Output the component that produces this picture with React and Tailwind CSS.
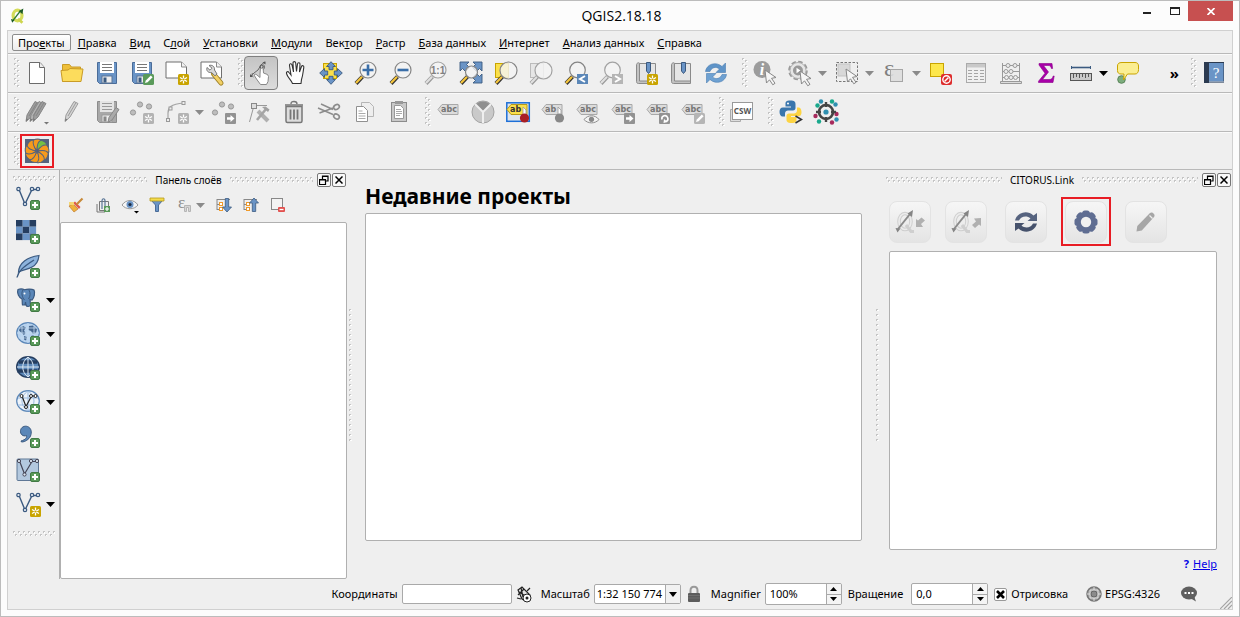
import React, { useId, useState } from "react";

const BLUE = "#6a94c6";
const NAVY = "#3b5a80";
const PALE = "#d3d3d3";

function Icon({ size = 24, children }) {
  return (
    <svg width={size} height={size} viewBox={`0 0 ${size} ${size}`} fill="none" aria-hidden="true" className="shrink-0 overflow-visible">
      {children}
    </svg>
  );
}

function Grip({ vertical, className }) {
  const id = useId();
  return (
    <svg className={className} aria-hidden="true">
      <defs>
        <pattern id={id} width={vertical ? 6 : 5} height={vertical ? 5 : 6} patternUnits="userSpaceOnUse">
          {vertical ? (
            <>
              <rect x="0" y="0" width="2" height="2" fill="#c4c4c4" />
              <rect x="1" y="1" width="2" height="1" fill="#fff" />
              <rect x="3" y="2" width="2" height="2" fill="#c4c4c4" />
              <rect x="4" y="3" width="2" height="1" fill="#fff" />
            </>
          ) : (
            <>
              <rect x="0" y="0" width="2" height="2" fill="#c4c4c4" />
              <rect x="1" y="1" width="1" height="2" fill="#fff" />
              <rect x="2" y="3" width="2" height="2" fill="#c4c4c4" />
              <rect x="3" y="4" width="1" height="2" fill="#fff" />
            </>
          )}
        </pattern>
      </defs>
      <rect width="100%" height="100%" fill={`url(#${id})`} />
    </svg>
  );
}

function Caret({ color = "#000" }) {
  return (
    <svg width="9" height="5" viewBox="0 0 9 5" aria-hidden="true" className="shrink-0">
      <path d="M0 0h9L4.500 5z" fill={color} />
    </svg>
  );
}

/* ---- badges drawn over the lower right corner ---- */
const Plus = ({ x = 14, y = 14 }) => (
  <g transform={`translate(${x} ${y})`}>
    <rect x=".5" y=".5" width="9" height="9" rx="1.500" fill="#5a9a5a" stroke="#417a45" />
    <path d="M5 2v6M2 5h6" stroke="#fff" strokeWidth="2" />
  </g>
);
const Star = ({ x = 13, y = 13, c = "#c9a400" }) => (
  <g transform={`translate(${x} ${y})`}>
    <rect width="11" height="11" rx="1.500" fill={c} />
    <path d="M5.500 1.500v8M2 3.500l7 4M9 3.500l-7 4" stroke="#fff" strokeWidth="1.300" />
    <circle cx="5.500" cy="5.500" r="1.100" fill={c} />
  </g>
);
const GoBadge = ({ x = 13, y = 13 }) => (
  <g transform={`translate(${x} ${y})`}>
    <rect width="11" height="11" rx="1" fill="#929292" />
    <path d="M2 4.200h3.500V2L9.500 5.500 5.500 9V6.800H2z" fill="#fff" />
  </g>
);
const PenBadge = ({ x = 13, y = 13, c = "#5a9a5a" }) => (
  <g transform={`translate(${x} ${y})`}>
    <rect width="11" height="11" rx="1.500" fill={c} />
    <path d="M2 9l.8-2.600 5-5 1.800 1.800-5 5z" fill="#fff" />
  </g>
);

/* ---- project icons ---- */
const NewFile = () => (
  <Icon>
    <path d="M4.500 1.500h10.500l4.500 5v16h-15z" fill="#fff" stroke="#6c6c6c" />
    <path d="M14.500 1.500v5h5" fill="#eee" stroke="#6c6c6c" />
  </Icon>
);
const OpenFolder = () => (
  <Icon>
    <path d="M2.500 20.500v-17h7l2 2.500h9v4" fill="#eebf3a" stroke="#c99b26" />
    <path d="M2.500 20.500L1 9.500l7-.5 2-1.500L23 8l-2 12.500z" fill="#fcdc5c" stroke="#c99b26" />
  </Icon>
);
const Floppy = ({ grey, children }) => (
  <Icon>
    <path d="M2.500 1.500h19v21h-17l-2-2z" fill={grey ? "#a8a8a8" : BLUE} stroke={grey ? "#8c8c8c" : "#4a6c98"} />
    <rect x="5" y="1" width="14" height="11" fill={grey ? "#e4e4e4" : "#fff"} />
    <path d="M7 3.500h10M7 6.500h10M7 9.500h10" stroke={grey ? "#999" : "#777"} strokeWidth="1.200" />
    <rect x="7" y="15" width="10" height="7" fill="#ececec" stroke={grey ? "#999" : "#5a7497"} />
    <rect x="8.500" y="16.500" width="3" height="5" fill={grey ? "#888" : NAVY} />
    {children}
  </Icon>
);
const Sheet = () => (
  <>
    <path d="M1 1h15.500l5 5v11H1z" fill="#fff" stroke="#6f6f6f" />
    <path d="M16.500 1v5h5" fill="#f2f2f2" stroke="#8a8a8a" />
  </>
);
const NewComposer = () => (
  <Icon>
    <Sheet />
    <Star />
  </Icon>
);
const ComposerManager = () => (
  <Icon>
    <Sheet />
    <path d="M13.500 13l7.500 9" stroke="#9c7f25" strokeWidth="5" strokeLinecap="round" />
    <path d="M14 13.500l7 8.500" stroke="#f2d066" strokeWidth="3.200" strokeLinecap="round" />
    <path d="M9 4.500c3-1 6 1 5.500 4.500l2.500 4-2 1.800-3.500-3.300C8 12 6 9.500 7 6.500l3 2.700 2-2z" fill="#d8d8d8" stroke="#777" />
  </Icon>
);

/* ---- navigation icons ---- */
const TouchHand = () => (
  <Icon>
    <path d="M11 13L11.500 6c.2-1.700 2.400-1.700 2.500 0l.5 6 4 1.500 1 2-.5 5-1.500 3h-6l-4-5.500-2.500-4c.5-1 2-1 3 0l3 2.500z" fill="#fff" stroke="#888" />
    <path d="M1.500 15.500L5 12l4-3 3-5 3.500-3" stroke="#666" />
    <path d="M14.500 8.500c1.500-1.500 1.500-3.500 0-5M4.500 16c-1.500-1-2-2.500-1-4" stroke="#777" />
    <path d="M1 13v3h3zM16.500.5v3l-3-2z" fill="#555" />
    <circle cx="12.700" cy="5.500" r="1.600" stroke="#555" />
  </Icon>
);
const PanHand = () => (
  <Icon>
    <path d="M8 22.500c-1-3-5-6-6-10-.5-2 1.500-2.500 2.500-1L6.500 14 5 4.500c-.2-2 2-2.300 2.500-.5l1.500 7-.5-9c0-1.800 2.500-1.800 2.700 0l.8 8.500 1-7.500c.3-1.800 2.600-1.500 2.500.3L15 11l2-5.500c.7-1.500 2.600-.8 2.300.8-.8 5-1 9-2.300 12.200l-.5 4z" transform="translate(.5 0)" fill="#fff" stroke="#333" strokeWidth="1.100" />
  </Icon>
);
const PanSelection = () => (
  <Icon>
    <rect x="4.500" y="2.500" width="13" height="15" fill="#fbe04a" stroke="#c9a400" />
    <path d="M12 .7l4.500 4.800h-2.500v3.200h-4V5.500H7.500zM12 23.300l4.500-4.800h-2.500v-3.200h-4v3.200H7.500zM.7 12l4.800-4.500v2.500h3.200v4H5.500v2.500zM23.300 12l-4.800-4.500v2.500h-3.200v4h3.200v2.500z" fill={BLUE} stroke={NAVY} strokeWidth=".9" />
  </Icon>
);
const Lens = ({ grey, cx = 14, cy = 9, r = 8 }) => (
  <>
    <path d="M2 22.500l6.500-6.800" stroke={grey ? "#999" : "#333"} strokeWidth="4" />
    <path d="M2 22l6-6.300" stroke={grey ? "#e0e0e0" : "#f5c53c"} strokeWidth="2.200" />
    <circle cx={cx} cy={cy} r={r} fill="#f4f4f4" fillOpacity=".82" stroke={grey ? "#a2a2a2" : "#858585"} strokeWidth="1.200" />
  </>
);
const ZoomIn = () => (
  <Icon>
    <Lens />
    <path d="M14 3.500v11M8.500 9h11" stroke="#3a6ea8" strokeWidth="2.600" />
  </Icon>
);
const ZoomOut = () => (
  <Icon>
    <Lens />
    <path d="M8.500 9h11" stroke="#3a6ea8" strokeWidth="2.600" />
  </Icon>
);
const ZoomNative = () => (
  <Icon>
    <Lens grey />
    <text x="14" y="12.500" textAnchor="middle" fontSize="10" fontWeight="bold" fill="#808080" fontFamily="Liberation Sans, sans-serif">1:1</text>
  </Icon>
);
const ZoomFull = () => (
  <Icon>
    <path d="M1 1h9L7.500 3.500l3 3-4 4-3-3L1 10zM23 1h-9l2.500 2.500-3 3 4 4 3-3L23 10zM23 22v-9l-2.500 2.500-3-3-4 4 3 3L14 22z" fill={BLUE} stroke={NAVY} strokeWidth=".9" />
    <Lens cx={12.500} cy={11} r={6} />
  </Icon>
);
const ZoomSelection = () => (
  <Icon>
    <rect x="1.500" y="2.500" width="13" height="14" fill="#fbe04a" stroke="#c9a400" />
    <Lens cx={14.500} cy={9.500} r={8.500} />
  </Icon>
);
const ZoomLayer = () => (
  <Icon>
    <rect x="1.500" y="2.500" width="13" height="14" fill="#e6e6e6" stroke="#bbb" />
    <Lens grey cx={14.500} cy={9.500} r={8.500} />
  </Icon>
);
const ZoomHistory = ({ next }) => (
  <Icon>
    <Lens grey={next} cx={13.500} cy={9} r={7.800} />
    <rect x="13" y="13" width="11" height="10" fill={next ? "#b5b5b5" : "#5b87b8"} />
    <path d={next ? "M16 15l5 3-5 3" : "M21 15l-5 3 5 3"} stroke="#fff" strokeWidth="2" />
  </Icon>
);
const Book = ({ star }) => (
  <Icon>
    <path d="M2.500 3.500c0-1.500 3-2.500 3-1v17h16v3h-17c-1.500 0-2-1-2-2z" fill="#c2c2c2" stroke="#8a8a8a" />
    <path d="M5.500 2.500h16v17.500h-16z" fill="#e5e5e5" stroke="#8a8a8a" />
    <path d="M12.500 1.500h4v8.500l-2 2.500-2-2.500z" fill={BLUE} stroke={NAVY} />
    {star && <Star x={13} y={13} />}
  </Icon>
);
const Refresh = () => (
  <Icon>
    <path d="M1.500 10.500C2.500 3 12 0 18 5.500L21.500 2v9.500H12L15.500 8C12 5 7.500 6.500 6 10.500z" fill="#5f94c8" stroke="#4a7cb0" strokeWidth=".6" />
    <path d="M22.500 13.500C21.500 21 12 24 6 18.500L2.500 22v-9.500H12L8.500 16C12 19 16.500 17.500 18 13.500z" fill="#6ea1d2" stroke="#4a7cb0" strokeWidth=".6" />
  </Icon>
);

/* ---- attribute icons ---- */
const Cursor = ({ x = 12, y = 9 }) => (
  <path transform={`translate(${x} ${y})`} d="M0 0l11 7.500-4.500.8 3.500 5-2.200 1.500-3.300-5L1.500 13z" fill="#f6f6f6" stroke="#888" />
);
const Identify = () => (
  <Icon>
    <circle cx="9" cy="8.500" r="8.500" fill="#9c9c9c" />
    <text x="9" y="14" textAnchor="middle" fontSize="16" fontWeight="bold" fontStyle="italic" fill="#fff" fontFamily="Liberation Serif, serif">i</text>
    <Cursor />
  </Icon>
);
const RunAction = () => (
  <Icon>
    <circle cx="10" cy="9.500" r="8.800" stroke="#999" strokeWidth="2" strokeDasharray="4.500 2.400" />
    <circle cx="10" cy="9.500" r="8" fill="#e6e6e6" stroke="#b0b0b0" />
    <circle cx="10" cy="9.500" r="5" fill="#999" />
    <path d="M8.500 6.800l4 2.700-4 2.700z" fill="#fff" />
    <Cursor x={12} y={10} />
  </Icon>
);
const SelectRect = () => (
  <Icon>
    <rect x="1.500" y="1.500" width="21" height="19" stroke="#777" strokeDasharray="2.500 1.500" />
    <rect x="3" y="3" width="12" height="12" fill="#d8d8d8" stroke="#c3c3c3" />
    <Cursor x={11} y={8} />
  </Icon>
);
const SelectExpr = () => (
  <Icon>
    <text x="2" y="15" fontSize="24" fill="#808080" fontFamily="Liberation Serif, serif">ε</text>
    <rect x="8.500" y="8.500" width="12" height="12" fill="#dcdcdc" fillOpacity=".85" stroke="#a5a5a5" />
  </Icon>
);
const Deselect = () => (
  <Icon>
    <rect x="1.500" y="2.500" width="13" height="13" fill="#fde74c" stroke="#c9a400" />
    <rect x="12" y="13" width="11" height="11" rx="2" fill="#dd2c2c" />
    <circle cx="17.500" cy="18.500" r="3.700" stroke="#fff" strokeWidth="1.400" />
    <path d="M15.500 20.500l4-4" stroke="#fff" strokeWidth="1.400" />
  </Icon>
);
const TableIcon = () => (
  <Icon>
    <rect x="2.500" y="2.500" width="19" height="19" fill="#f0f0f0" stroke="#aaa" />
    <rect x="3" y="3" width="18" height="3.500" fill="#c9c9c9" />
    <path d="M4 9.500h4M10 9.500h4M16 9.500h4M4 12.500h4M10 12.500h4M16 12.500h4M4 15.500h4M10 15.500h4M16 15.500h4M4 18.500h4M10 18.500h4M16 18.500h4" stroke="#a5a5a5" />
  </Icon>
);
const Abacus = () => (
  <Icon>
    <path d="M3.500 2v18M20.500 2v18M3.500 4.500h17M3.500 10.500h17M3.500 16.500h17" stroke="#999" />
    <path d="M1.500 20.500h21v2h-21z" fill="#ddd" stroke="#999" />
    {[[9, 4.500], [16, 4.500], [7, 10.500], [12, 10.500], [7.500, 16.500], [12, 16.500], [16.500, 16.500]].map(([x, y]) => (
      <circle key={`${x}-${y}`} cx={x} cy={y} r="2" fill="#ececec" stroke="#999" />
    ))}
  </Icon>
);
const Sigma = () => (
  <Icon>
    <path d="M5 2.500h13l.6 5h-1.200c-.5-2.500-1.500-3-3.500-3H9.500l5 6.500-6 7.500h6.500c2.500 0 3.500-1 4.200-3.500h1l-1.200 6.500H4.500v-1.300L11 12.300 5 4z" fill="#a800a8" stroke="#8a008a" strokeWidth=".6" />
  </Icon>
);
const Measure = () => (
  <Icon>
    <path d="M2 6.500h20" stroke={NAVY} strokeWidth="1.600" />
    <path d="M2.500 5v3M21.500 5v3" stroke={NAVY} />
    <rect x="1.500" y="12.500" width="21" height="7" fill="#c9c9c9" stroke="#555" />
    <path d="M4.500 13v4M7.500 13v3M10.500 13v4M13.500 13v3M16.500 13v4M19.500 13v3" stroke="#555" />
  </Icon>
);
const Tip = () => (
  <Icon>
    <circle cx="5.500" cy="18.500" r="3.800" fill="#7dad7d" stroke="#5a855a" />
    <path d="M6 1.500h13c2 0 3.500 1 3.500 3.500v3.500c0 2.500-1 4.500-3.500 4.500h-7.500l-4 6 .5-6H5c-2 0-3.500-1-3.500-3.500V5c0-2.500 1.500-3.500 4.500-3.500z" fill="#fbee92" stroke="#c9a400" />
  </Icon>
);
const HelpBook = () => (
  <Icon>
    <rect x="2" y="1" width="20" height="21" fill="#2b3a50" />
    <rect x="7" y="2" width="14.500" height="18.500" fill={BLUE} />
    <path d="M7 21h15" stroke="#cfd8e4" />
    <text x="14.200" y="16.500" textAnchor="middle" fontSize="15" fill="#fff" fontFamily="Liberation Serif, serif">?</text>
  </Icon>
);

/* ---- digitizing icons ---- */
const PencilShape = ({ dx = 0, fill = PALE, edge = "#9b9b9b" }) => (
  <g transform={`translate(${dx} 0)`}>
    <path d="M4 21.500l1-6.500L13 1.500l4 2L9 17z" fill={fill} stroke={edge} />
    <path d="M7 16L15 2.500" stroke={edge} />
    <path d="M4 21.500l.5-3 2 1z" fill="#777" />
  </g>
);
const Edits = () => (
  <Icon>
    <PencilShape dx={-3} fill="#9d9d9d" edge="#868686" />
    <PencilShape dx={1} fill="#b3b3b3" edge="#8a8a8a" />
    <PencilShape dx={4} fill="#9d9d9d" edge="#868686" />
    <path d="M19 22h5l-2.500 2.500z" fill="#777" />
  </Icon>
);
const TogglePencil = () => (
  <Icon>
    <PencilShape dx={1} />
  </Icon>
);
const SaveEdits = () => (
  <Floppy grey>
    <path d="M13 22.500l1-5 7-10 3 2-7 10.500z" fill="#aaa" stroke="#888" />
  </Floppy>
);
const Points = () =>
  [[3, 12.500], [10, 4.500], [19, 6.500]].map(([x, y]) => (
    <circle key={x} cx={x} cy={y} r="2.600" fill="#bdbdbd" stroke="#989898" />
  ));
const AddPoint = () => (
  <Icon>
    <Points />
    <Star c="#b3b3b3" />
  </Icon>
);
const AddCurve = () => (
  <Icon>
    <path d="M3 20V13c0-5 2-9 16-10" stroke="#a5a5a5" strokeWidth="1.200" />
    {[[1.500, 18.500], [4, 7], [17, 1.500]].map(([x, y]) => (
      <rect key={x} x={x} y={y} width="3" height="3" fill="#eee" stroke="#999" />
    ))}
    <Star c="#b3b3b3" />
  </Icon>
);
const MovePoint = () => (
  <Icon>
    <Points />
    <GoBadge />
  </Icon>
);
const NodeTool = () => (
  <Icon>
    <path d="M2.500 22L7 5.500H20" stroke="#999" />
    <rect x="4.500" y="3.500" width="5" height="5" fill="#ddd" stroke="#888" />
    <path d="M11 11l10 10" stroke="#b0b0b0" strokeWidth="4" />
    <path d="M19 9l-9 11" stroke="#a5a5a5" strokeWidth="2.600" />
    <path d="M15 7l6 5 1.500-2.500-4-3z" fill="#a0a0a0" />
  </Icon>
);
const Trash = () => (
  <Icon>
    <path d="M4 6.500h16v14.500c0 1-.5 1.500-1.500 1.500h-13c-1 0-1.500-.5-1.500-1.500z" fill="#ddd" stroke="#777" strokeWidth="1.500" />
    <path d="M3 5h18M9 4c0-2 1-2.500 3-2.500s3 .5 3 2.500" stroke="#777" strokeWidth="1.400" />
    <path d="M8.500 9.500v10M12 9.500v10M15.500 9.500v10" stroke="#777" strokeWidth="1.800" />
  </Icon>
);
const Scissors = () => (
  <Icon>
    <path d="M1 8l15 6.500M4 4l12 5.500M16 8L2.500 13" stroke="#8c8c8c" strokeWidth="1.400" />
    <ellipse cx="19.500" cy="7" rx="3" ry="2.300" transform="rotate(-30 19.500 7)" stroke="#8c8c8c" strokeWidth="1.600" />
    <ellipse cx="19.500" cy="16.500" rx="3" ry="2.300" transform="rotate(35 19.500 16.500)" stroke="#8c8c8c" strokeWidth="1.600" />
  </Icon>
);
const Copy = () => (
  <Icon>
    <path d="M9.500 2.500h8l4 4v10h-12z" fill="#eee" stroke="#b5b5b5" />
    <path d="M4.500 6.500h7l4 4v11h-11z" fill="#fff" stroke="#909090" />
    <path d="M6.500 11h4M6.500 13.500h7M6.500 16h7M6.500 18.500h7" stroke="#aaa" />
  </Icon>
);
const Paste = () => (
  <Icon>
    <rect x="4.500" y="2.500" width="15" height="19" fill="#c9c9c9" stroke="#8c8c8c" />
    <path d="M7.500 5.500h6l3 3v10h-9z" fill="#fff" stroke="#999" />
    <path d="M8 1h8v3H8z" fill="#999" />
    <path d="M9 9.500h5M9 11.500h6M9 13.500h6M9 15.500h4" stroke="#aaa" />
  </Icon>
);

/* ---- label icons ---- */
const Tag = ({ text = "abc", fill = "#dcdcdc", stroke = "#a8a8a8", color = "#757575" }) => (
  <>
    <path d="M2 10.500l4-5h16v10H6z" fill={fill} stroke={stroke} />
    <text x="5" y="13" fontSize="8" fontWeight="bold" fill={color} fontFamily="DejaVu Sans, sans-serif">{text}</text>
  </>
);
const LabelPlain = () => (
  <Icon>
    <g transform="translate(0 -1)"><Tag /></g>
  </Icon>
);
const Diagram = () => (
  <Icon>
    <circle cx="12" cy="12" r="11" fill="#c9c9c9" stroke="#a3a3a3" />
    <path d="M12 12L4.500 4.500A11 11 0 0 1 19.500 4.500z" fill="#8f8f8f" />
    <path d="M12 23V12L4 4M12 12l8-8" stroke="#efefef" strokeWidth="2" />
  </Icon>
);
const Pin = ({ head = "#888" }) => (
  <>
    <path d="M17 7v8h3v-5z" fill="#fff" stroke="#999" strokeWidth=".8" />
    <circle cx="18.500" cy="18" r="4.600" fill={head} />
  </>
);
const PinActive = () => (
  <Icon>
    <rect x=".8" y="2.800" width="22.500" height="18.500" fill="#dfe5ec" stroke="#1d6fd8" strokeWidth="1.500" />
    <g transform="translate(-1 -1)"><Tag text="ab" fill="#fbe04a" stroke="#b79a1a" color="#333" /></g>
    <Pin head="#a91f24" />
  </Icon>
);
const PinGrey = () => (
  <Icon>
    <g transform="translate(-1 -1)"><Tag text="ab" /></g>
    <Pin />
  </Icon>
);
const LabelEye = () => (
  <Icon>
    <g transform="translate(-1 -1)"><Tag /></g>
    <path d="M8 19.500c4-5 11-5 15 0-4 4.500-11 4.500-15 0z" fill="#f4f4f4" stroke="#8c8c8c" />
    <circle cx="15.500" cy="19.300" r="2.600" fill="#888" />
  </Icon>
);
const LabelMove = () => (
  <Icon>
    <g transform="translate(-1 -1)"><Tag /></g>
    <GoBadge />
  </Icon>
);
const LabelRotate = () => (
  <Icon>
    <g transform="translate(-1 -1)"><Tag /></g>
    <rect x="13" y="13" width="11" height="11" rx="1" fill="#929292" />
    <path d="M16 19.500a3 3 0 1 1 4 2" stroke="#fff" strokeWidth="1.600" />
    <path d="M18 19l3.500 3-4 1z" fill="#fff" />
  </Icon>
);
const LabelEdit = () => (
  <Icon>
    <g transform="translate(-1 -1)"><Tag /></g>
    <PenBadge c="#b5b5b5" />
  </Icon>
);
const Csw = () => (
  <Icon>
    <path d="M.5 9.500h10v12H.5z" fill="#ddd" stroke="#aaa" />
    <rect x="2.500" y="2.500" width="20" height="17" fill="#fff" stroke="#999" />
    <text x="12.500" y="14" textAnchor="middle" fontSize="8" fontWeight="bold" fill="#555" fontFamily="Noto Sans, sans-serif">CSW</text>
  </Icon>
);
const Python = () => (
  <Icon>
    <path d="M11.500.5c-4.500 0-5 1.500-5 3.500v2.500h5.500v1H4C1.500 7.500.5 9.500.5 12s1.500 4.500 3 4.500h2.500v-3c0-2 1.500-3 3-3h5c1.500 0 2.500-1 2.500-2.500V4c0-2-1-3.500-5-3.500z" fill="#3a76ad" />
    <path d="M12.500 23c4.500 0 5-1.500 5-3.500V17H12v-1h8c2 0 2.500-2 2.500-4s-1-4.500-2.500-4.500h-2v3c0 2-1.500 3-3 3h-5c-1.500 0-2.500 1-2.500 2.500v4c0 1.500 1 3 5 3z" fill="#fdd443" />
    <circle cx="9" cy="3.500" r="1" fill="#fff" />
    <path d="M16.500 16l6 3.500-6 3.500" stroke="#333" strokeWidth="1.500" />
  </Icon>
);
const Target = () => (
  <Icon>
    {[[7, 1.500, "#2f8fb0"], [3.500, 5.500, "#19a88c"], [18, 1.500, "#19a88c"], [21.500, 4.500, "#2f8fb0"], [1.500, 16, "#a62a5c"], [5, 21.500, "#19a88c"], [18, 22.500, "#a62a5c"], [22.500, 19.500, "#2f8fb0"], [22.500, 14, "#a62a5c"]].map(([x, y, c]) => (
      <circle key={`${x}-${y}`} cx={x} cy={y} r="2.200" fill={c} />
    ))}
    <circle cx="12" cy="12" r="7" fill="#efefef" stroke="#444" strokeWidth="2.600" />
    <path d="M12 2v5M12 17v5M2 12h5M17 12h5" stroke="#444" strokeWidth="2.400" />
    <circle cx="12" cy="12" r="2.600" fill="#2f8fb0" />
  </Icon>
);
const Citrus = () => (
  <Icon>
    <rect width="24" height="24" fill="#56637d" />
    {[0, 40, 80, 120, 160, 200, 240, 280, 320].map((a) => (
      <path key={a} d="M12 11.300C10.500 8 9 3.500 12 .6c3-.4 6.300.6 7.600 2.800C16.500 4.500 14 7 12 11.300z" fill={a === 0 ? "#f79a1c" : a === 40 ? "#76c043" : "#f79a1c"} stroke="#56637d" strokeWidth="1" transform={`rotate(${a - 20} 12 12)`} />
    ))}
  </Icon>
);

/* ---- layer source icons ---- */
const Vee = ({ dark = NAVY }) => (
  <>
    <path d="M3 3.500L9 18 16 3.500h6" stroke={dark} strokeWidth="1.400" />
    {[[2.500, 3], [16, 3], [22, 3], [9, 18]].map(([x, y]) => (
      <circle key={`${x}-${y}`} cx={x} cy={y} r="1.700" fill="#e9eef4" stroke={dark} strokeWidth="1.200" />
    ))}
  </>
);
const AddVector = () => (
  <Icon>
    <Vee />
    <Plus />
  </Icon>
);
const RASTER = ["#263e60", "#6a94c6", "#263e60", "#6a94c6", "#263e60", "#6a94c6", "#263e60", "#6a94c6", "#41679a"];
const AddRaster = () => (
  <Icon>
    {RASTER.map((c, i) => (
      <rect key={i} x={(i % 3) * 6.700} y={Math.floor(i / 3) * 6.700} width="6.700" height="6.700" fill={c} />
    ))}
    <Plus />
  </Icon>
);
const AddFeather = () => (
  <Icon>
    <path d="M2.500 18C3 9 11 3 23 1.500c-.5 5-2 9-7 11.500-4 2.500-8 2.500-11 4z" fill="#8db3dc" stroke={NAVY} strokeWidth="1.200" />
    <path d="M1 23.500c1-6 6-10.500 17-17.500" stroke={NAVY} strokeWidth="1.400" />
    <Plus />
  </Icon>
);
const AddElephant = () => (
  <Icon>
    <path d="M2 1.500c3-1 5-.5 6.500.3C11 .8 16 .8 18 2c1.500 3 0 8-2 10l-2-.5.5 5.500c-1 2-4 2-4.500 0l-.5-3-.5 3H6.500c-.5-2 0-4-.5-6C3 9.500.5 5 2 1.500z" fill="#5b87b8" stroke={NAVY} strokeWidth="1.200" />
    <path d="M7 2C5 5 6 9 8.500 12M13 2c1.500 3 1.500 6-.5 9" stroke={NAVY} />
    <circle cx="8.500" cy="5.500" r="1" fill="#fff" />
    <Plus />
  </Icon>
);
const AddWms = () => (
  <Icon>
    <ellipse cx="12" cy="11" rx="11.300" ry="10.300" fill="#b7d2ee" stroke="#5b87b8" strokeWidth="1.200" />
    <path d="M4 5.500l3-1.500 3 1.500-2 3 1.500 2.500-1.500 2-3-2.500-2-2zM13 4l4-.5 4 3.500-1 4-3 1-2-3-2.500-1zM8 14l3 1-1 3.500-2-1zM15 14l3-1-1 4.500-2 1z" fill="#46678f" />
    <path d="M1 11h22M2.500 6h19M2.500 16h19M12 1v20M6 3v16M18 3v16" stroke="#c4daf0" strokeWidth=".8" />
    <Plus />
  </Icon>
);
const AddWcs = () => (
  <Icon>
    <ellipse cx="12" cy="11" rx="11.300" ry="10.300" fill="#5b87b8" stroke="#263e60" strokeWidth="1.400" />
    <path d="M3 6h18M1.500 15h20" stroke="#263e60" strokeWidth="3.500" />
    <path d="M1 11h22M12 1v20M12 1c-7 5-7 15 0 20M12 1c7 5 7 15 0 20" stroke="#dbe7f3" />
    <Plus />
  </Icon>
);
const AddWfs = () => (
  <Icon>
    <ellipse cx="12" cy="11" rx="11.300" ry="10.300" fill="#edf3fa" stroke="#5b87b8" strokeWidth="1.200" />
    <path d="M2 8h20M2 15h20M12 1v20M12 1c-8 5-8 15 0 20M12 1c8 5 8 15 0 20" stroke="#9bbbe0" />
    <path d="M6 6l4 10.500L15.500 6H19" stroke="#222" strokeWidth="1.200" />
    {[[5.500, 6], [10, 17], [15, 6], [19.500, 6]].map(([x, y]) => (
      <circle key={x} cx={x} cy={y} r="1.500" fill="#fff" stroke="#222" />
    ))}
    <Plus />
  </Icon>
);
const AddComma = () => (
  <Icon>
    <path d="M5 17c5-1.500 6-3.500 5.500-5.500C7 13 4 10 4.500 6.500 5 3 8.500 1.500 11.500 2.500c4 1.500 4.500 6 3 9.500C13 15.500 9 18 5.500 18z" fill="#5b87b8" stroke={NAVY} />
    <Plus />
  </Icon>
);
const AddVirtual = () => (
  <Icon>
    <rect x="1" y="1" width="21.500" height="21.500" rx="1" fill="#b3c8de" stroke="#5f7896" />
    <path d="M3.500 3L8.500 16 16 3.500h5" stroke="#445" strokeWidth="1.200" />
    {[[3, 3], [8.500, 16.500], [15, 3], [21, 3]].map(([x, y]) => (
      <circle key={x} cx={x} cy={y} r="1.600" fill="#dfe9f3" stroke="#445" />
    ))}
    <Plus />
  </Icon>
);
const NewLayer = () => (
  <Icon>
    <Vee />
    <g transform="translate(1 1)"><Star /></g>
  </Icon>
);

/* ---- layer panel icons (16px) ---- */
const Brush = () => (
  <Icon size={16}>
    <path d="M1 9l4-2 5 5-4 3z" fill="#f0b23c" stroke="#c0782c" strokeWidth=".7" />
    <path d="M5 6l6 6 1.500-2L7 4.500z" fill="#e05a4a" />
    <path d="M8.500 7.500L14.500 1.500" stroke="#c88a3a" strokeWidth="2.200" />
    <path d="M1 5h5v3H1z" fill="#f4d774" />
  </Icon>
);
const AddGroup = () => (
  <Icon size={16}>
    <path d="M4.500 4.500h9v9h-9zM2 7v8h8" stroke="#777" />
    <path d="M7 12V4c0-3 3-3 3 0v8" stroke="#5b7797" strokeWidth="1.200" />
    <rect x="9" y="9" width="6" height="6" fill="#5a9a5a" />
    <path d="M12 10v4M10 12h4" stroke="#fff" strokeWidth="1.200" />
  </Icon>
);
const Eye = () => (
  <Icon size={16}>
    <path d="M0 8c4-6 12-6 16 0-4 5-12 5-16 0z" fill="#f5f5f5" stroke="#999" />
    <circle cx="8" cy="7.500" r="3.500" fill="#6a94c6" />
    <circle cx="8" cy="7.500" r="1.600" fill="#1d2b40" />
    <path d="M12 14h5l-2.500 2.500z" fill="#000" />
  </Icon>
);
const Funnel = () => (
  <Icon size={16}>
    <path d="M1.500 2.500h13L9.500 8v6.500h-3V8z" fill="#6a94c6" stroke="#4a6c98" />
    <path d="M1 1h14v3H1z" fill="#f4dc4c" stroke="#b79a1a" strokeWidth=".8" />
  </Icon>
);
const ExprFilter = () => (
  <Icon size={16}>
    <text x="2" y="11" fontSize="17" fill="#8a8a8a" fontFamily="Liberation Serif, serif">ε</text>
    <path d="M8.500 8.500h6v6h-2v-4h-2v4h-2z" fill="#d5d5d5" stroke="#b5b5b5" />
  </Icon>
);
const TreeArrow = ({ up }) => (
  <Icon size={16}>
    <path d="M1 2.500h13M1 2v11M1 7.500h6M1 12.500h6" stroke="#888" />
    <rect x="3.500" y="5.500" width="3" height="3" fill="#fff" stroke="#f09a2a" />
    <rect x="3.500" y="10.500" width="3" height="3" fill="#fff" stroke="#f09a2a" />
    <path d={up ? "M11 1l4.500 5h-2.800v8.500H9.300V6H6.500z" : "M11 15l4.500-5h-2.800V1.500H9.300V10H6.500z"} fill={BLUE} stroke={NAVY} strokeWidth=".8" />
  </Icon>
);
const RemoveLayer = () => (
  <Icon size={16}>
    <rect x="1.500" y="1.500" width="11" height="11" fill="#f3f3f3" stroke="#888" />
    <rect x="8" y="10" width="7" height="5" rx="1" fill="#e2504e" />
    <path d="M9.500 12.500h4" stroke="#fff" strokeWidth="1.300" />
  </Icon>
);

/* ---- Citorus panel icons ---- */
const QArrow = ({ out }) => (
  <Icon size={32}>
    <ellipse cx="11" cy="15.500" rx="6" ry="8" stroke="#cfcfcf" strokeWidth="3.600" />
    <ellipse cx="11" cy="15.500" rx="6" ry="8" stroke="#ececec" strokeWidth="1.600" />
    <path d="M12 19l5 6.500h3" stroke="#cfcfcf" strokeWidth="3" />
    <path d="M4 23L16 8" stroke="#8a8a8a" strokeWidth="2" />
    <path d="M19 4l-1 7-4.500-3.500zM1.500 22l5 .5-3 4z" fill="#858585" />
    <path d={out ? "M31 12v8l-2-1.500-4 3.500-3-3 4-3.500L24 12.500z" : "M22 21v-8l2 1.500 3.500-3 3.500 3-4 3.500 2 3z"} fill="#b0b0b0" />
  </Icon>
);
const Sync = () => (
  <Icon size={24}>
    <path d="M1 10.500C3 2.500 13-.5 19.500 5.500L23 3v8h-9.500l3-2.500C12.500 5 7 6.500 5 10.500z" fill="#56637f" />
    <path d="M23 13.500C21 21.500 11 24.500 4.500 18.500L1 21v-8h9.500l-3 2.500C11.500 19 17 17.500 19 13.500z" fill="#46526c" />
  </Icon>
);
const Gear = () => (
  <Icon size={24}>
    <g fill="#5f6d92">
      {[0, 45, 90, 135].map((a) => (
        <rect key={a} x="8.300" y=".5" width="7.400" height="23" rx="2.500" transform={`rotate(${a} 12 12)`} />
      ))}
      <circle cx="12" cy="12" r="10.200" />
    </g>
    <circle cx="12" cy="12" r="5.200" fill="#f0f0f0" />
  </Icon>
);
const BigPencil = () => (
  <Icon size={24}>
    <path d="M2.500 21.500l.8-5.500L16 3c2-2 6 1.500 4 4L7.800 20.500z" fill="#a6a6a6" />
    <path d="M15.500 5.500l3 3" stroke="#eee" strokeWidth="1.200" />
  </Icon>
);

/* ---- toolbar pieces ---- */
function Tool({ label, icon, pressed }) {
  return (
    <button
      type="button"
      aria-label={label}
      aria-pressed={pressed}
      className={
        pressed
          ? "mr-px flex h-[34px] w-[34px] shrink-0 items-center justify-center rounded-sm border border-[#7f7f7f] bg-linear-to-b from-[#c4c4c4] to-[#dcdcdc]"
          : "flex h-[34px] w-[35px] shrink-0 items-center pl-[5px]"
      }
    >
      {icon}
    </button>
  );
}

function Drop({ label, color = "#8a8a8a" }) {
  return (
    <button type="button" aria-label={label} className="flex h-[34px] w-3 shrink-0 items-center">
      <Caret color={color} />
    </button>
  );
}

const ToolGrip = () => <Grip vertical className="ml-2 h-[30px] w-[6px] shrink-0" />;
const FirstGrip = () => <Grip vertical className="ml-[6px] h-[30px] w-[6px] shrink-0" />;

function Toolbar({ label, last, children }) {
  return (
    <div
      role="toolbar"
      aria-label={label}
      className={
        last
          ? "flex h-[38px] shrink-0 items-center border-b border-[#b9b9b9] shadow-[inset_0_1px_0_#fafafa]"
          : "flex h-[39px] shrink-0 items-center border-b border-[#b9b9b9] shadow-[inset_0_1px_0_#fafafa]"
      }
    >
      {children}
    </div>
  );
}

const MENU = [
  ["Про", "е", "кты"],
  ["", "П", "равка"],
  ["", "В", "ид"],
  ["С", "л", "ой"],
  ["", "У", "становки"],
  ["", "М", "одули"],
  ["Век", "т", "ор"],
  ["", "Р", "астр"],
  ["", "Б", "аза данных"],
  ["", "И", "нтернет"],
  ["", "А", "нализ данных"],
  ["", "С", "правка"],
];

function MenuBar() {
  return (
    <nav className="flex h-[23px] shrink-0 items-center border-b border-[#b9b9b9] pl-1">
      {MENU.map(([before, key, after], i) => (
        <button
          key={before + key + after}
          type="button"
          className={
            i === 0
              ? "h-[17px] rounded-xs border border-[#8c8c8c] bg-linear-to-b from-white to-[#ececec] px-[5px] leading-4 whitespace-nowrap"
              : "h-[17px] pr-[6px] pl-[7px] leading-[18px] whitespace-nowrap"
          }
        >
          {before}
          <span className="underline underline-offset-1">{key}</span>
          {after}
        </button>
      ))}
    </nav>
  );
}

function DockTitle({ title }) {
  return (
    <div className="mt-[2px] flex h-4 shrink-0 items-center pr-px pl-1">
      <Grip className="h-[6px] min-w-0 flex-1" />
      <h2 className="mx-2 text-[10px] leading-4 whitespace-nowrap">{title}</h2>
      <Grip className="h-[6px] min-w-0 flex-1" />
      <div className="ml-1 flex gap-px">
        <button type="button" aria-label="Открепить" className="flex size-[14px] items-center justify-center rounded-xs border border-[#777] bg-[#f8f8f8]">
          <svg width="10" height="10" viewBox="0 0 10 10" fill="none" aria-hidden="true">
            <path d="M3.500 4V1h5.500v5H7M3 1.500h6.500M.5 4.500h6v5h-6zM.5 5h6" stroke="#000" strokeWidth="1.200" />
          </svg>
        </button>
        <button type="button" aria-label="Закрыть панель" className="flex size-[14px] items-center justify-center rounded-xs border border-[#777] bg-[#f8f8f8]">
          <svg width="8" height="8" viewBox="0 0 8 8" aria-hidden="true">
            <path d="M.5.500l7 7M7.500.500l-7 7" stroke="#000" strokeWidth="1.500" />
          </svg>
        </button>
      </div>
    </div>
  );
}

const SOURCES = [
  ["Добавить векторный слой", <AddVector />, false],
  ["Добавить растровый слой", <AddRaster />, false],
  ["Добавить слой SpatiaLite", <AddFeather />, false],
  ["Добавить слой PostGIS", <AddElephant />, true],
  ["Добавить слой WMS", <AddWms />, true],
  ["Добавить слой WCS", <AddWcs />, false],
  ["Добавить слой WFS", <AddWfs />, true],
  ["Добавить слой из текста", <AddComma />, false],
  ["Добавить виртуальный слой", <AddVirtual />, false],
  ["Создать слой", <NewLayer />, true],
];

function SourceBar() {
  return (
    <div role="toolbar" aria-label="Слои" className="flex w-[52px] shrink-0 flex-col border-r border-[#b0b0b0] pt-[6px]">
      <Grip className="mx-[5px] h-[5px] w-[42px] shrink-0" />
      {SOURCES.map(([label, icon, menu]) => (
        <div key={label} className="flex h-[34px] shrink-0 items-center gap-[6px] pl-2">
          <button type="button" aria-label={label}>{icon}</button>
          {menu && (
            <button type="button" aria-label={`${label}: меню`} className="flex h-6 items-center">
              <Caret />
            </button>
          )}
        </div>
      ))}
      <Grip className="mx-[5px] mt-[10px] h-[5px] w-[42px] shrink-0" />
    </div>
  );
}

function Splitter({ wide }) {
  return (
    <div className={wide ? "flex w-[9px] shrink-0 items-center justify-center" : "flex w-[7px] shrink-0 items-center justify-center"}>
      <Grip vertical className="h-[132px] w-[3px]" />
    </div>
  );
}

function PanelButton({ label, children }) {
  return (
    <button type="button" aria-label={label} className="flex size-[42px] shrink-0 items-center justify-center rounded-lg border border-[#e3e3e3] bg-linear-to-b from-[#f6f6f6] to-[#e4e4e4]">
      {children}
    </button>
  );
}

function Spin({ id, value, onStep, onChange }) {
  return (
    <div className="flex h-[22px] w-[77px] shrink-0 overflow-hidden rounded-xs border border-[#a9a9a9] bg-white">
      <input id={id} value={value} onChange={(e) => onChange(e.target.value)} className="min-w-0 flex-1 px-1 outline-none" />
      <div className="flex w-[15px] flex-col border-l border-[#a9a9a9] bg-[#f4f4f4]">
        <button type="button" aria-label="Больше" onClick={() => onStep(1)} className="flex flex-1 items-center justify-center border-b border-[#a9a9a9]">
          <svg width="7" height="4" viewBox="0 0 7 4" aria-hidden="true"><path d="M0 4h7L3.500 0z" /></svg>
        </button>
        <button type="button" aria-label="Меньше" onClick={() => onStep(-1)} className="flex flex-1 items-center justify-center">
          <svg width="7" height="4" viewBox="0 0 7 4" aria-hidden="true"><path d="M0 0h7L3.500 4z" /></svg>
        </button>
      </div>
    </div>
  );
}

function StatusBar() {
  const [coords, setCoords] = useState("");
  const [zoom, setZoom] = useState("100%");
  const [angle, setAngle] = useState("0,0");
  return (
    <footer className="flex h-[30px] shrink-0 items-center justify-end whitespace-nowrap">
      <label htmlFor="coords" className="mr-1">Координаты</label>
      <input id="coords" value={coords} onChange={(e) => setCoords(e.target.value)} className="h-5 w-[110px] rounded-xs border border-[#a9a9a9] bg-white px-1 outline-none" />
      <button type="button" aria-label="Отслеживание курсора" className="ml-1">
        <Icon size={17}>
          <path d="M2 4l4-3 8 8-4 6-4-2z" fill="#e4e4e4" stroke="#222" strokeWidth="1.200" />
          <path d="M3 6l8 5M5 2l2 9M2 9l6-6M11 5l3-3M1 12l4 1" stroke="#222" strokeWidth="1.200" />
          <circle cx="11" cy="12" r="4" fill="#fff" stroke="#222" />
          <circle cx="11" cy="12" r="1.500" fill="#222" />
        </Icon>
      </button>
      <label htmlFor="scale" className="mr-1 ml-2">Масштаб</label>
      <div className="relative h-5 w-[87px] shrink-0">
        <select id="scale" className="h-5 w-full appearance-none rounded-xs border border-[#a9a9a9] bg-white pr-4 pl-[2px] outline-none">
          <option>1:32 150 774</option>
        </select>
        <span className="pointer-events-none absolute inset-y-px right-px flex w-[15px] items-center justify-center border-l border-[#a9a9a9] bg-[#f1f1f1]">
          <svg width="8" height="5" viewBox="0 0 8 5" aria-hidden="true"><path d="M0 0h8L4 5z" /></svg>
        </span>
      </div>
      <button type="button" aria-label="Закрепить масштаб" className="mx-[6px]">
        <svg width="14" height="18" viewBox="0 0 14 18" fill="none" aria-hidden="true">
          <path d="M3.500 9V5.500c0-5 7-5 7 0V9" stroke="#999" strokeWidth="2" />
          <rect x="1" y="8" width="12" height="9" rx="1" fill="#5c5c5c" />
          <path d="M1 10.500h12M1 13h12" stroke="#6f6f6f" />
        </svg>
      </button>
      <label htmlFor="magnifier" className="mr-1 ml-1">Magnifier</label>
      <Spin id="magnifier" value={zoom} onChange={setZoom} onStep={(d) => setZoom(`${parseInt(zoom, 10) + d * 10}%`)} />
      <label htmlFor="rotation" className="mr-2 ml-[6px]">Вращение</label>
      <Spin id="rotation" value={angle} onChange={setAngle} onStep={(d) => setAngle(`${parseInt(angle, 10) + d},0`)} />
      <label className="ml-[6px] flex items-center gap-1">
        <span className="relative flex size-[13px] items-center justify-center">
          <input type="checkbox" defaultChecked className="peer size-[13px] appearance-none rounded-xs border border-[#999] bg-white" />
          <svg width="9" height="9" viewBox="0 0 9 9" aria-hidden="true" className="pointer-events-none absolute hidden peer-checked:block">
            <path d="M1 1l7 7M8 1L1 8" stroke="#000" strokeWidth="2.600" />
          </svg>
        </span>
        Отрисовка
      </label>
      <button type="button" className="ml-[18px] flex items-center gap-[3px]">
        <Icon size={16}>
          <circle cx="8" cy="8" r="7" fill="#a0a0a0" stroke="#777" strokeWidth="1.500" />
          <path d="M8 1v14M1 8h14M4 4h8v8H4z" stroke="#ededed" strokeWidth=".8" />
          <circle cx="8" cy="8" r="3" fill="#8a8a8a" stroke="#666" />
        </Icon>
        EPSG:4326
      </button>
      <button type="button" aria-label="Сообщения" className="ml-5">
        <svg width="18" height="18" viewBox="0 0 18 18" aria-hidden="true">
          <ellipse cx="9" cy="8" rx="8" ry="6.500" fill="#5f5f5f" />
          <path d="M10 13l4-2 2 5.500z" fill="#5f5f5f" />
          <path d="M4.500 7h2v2h-2zM8 7h2v2H8zM11.500 7h2v2h-2z" fill="#fff" />
        </svg>
      </button>
      <svg width="12" height="12" viewBox="0 0 12 12" fill="none" aria-hidden="true" className="ml-[22px] self-end">
        <path d="M0 12L12 0M4 12l8-8M8 12l4-4" stroke="#a3a3a3" strokeWidth="1.200" />
      </svg>
    </footer>
  );
}

export default function App() {
  return (
    <div className="flex h-screen flex-col border border-[#bcbcbc] bg-[#fcfcfc] px-[6px] pb-[6px] font-['Noto_Sans','Open_Sans',sans-serif] text-[11px] text-black">
      <header className="flex h-[29px] shrink-0 items-center">
        <div className="flex flex-1 items-center pl-[3px]">
          <svg width="16" height="18" viewBox="0 0 18 18" fill="none" aria-hidden="true">
            <ellipse cx="8.500" cy="8.500" rx="5" ry="6" stroke="#d4dc5a" strokeWidth="3.600" />
            <path d="M9 12l5 4.500" stroke="#cdd54e" strokeWidth="3" />
            <path d="M3 14.500L12 3" stroke="#2c7a35" strokeWidth="1.600" />
            <path d="M15 .5l-1 6.500-4-3.500zM1 12.500l4 1-2.500 3z" fill="#1e5c28" />
          </svg>
        </div>
        <h1 className="font-['Open_Sans',sans-serif] text-[14px]">QGIS2.18.18</h1>
        <div className="flex flex-1 justify-end self-start">
          <button type="button" aria-label="Свернуть" className="flex h-5 w-7 items-center justify-center">
            <svg width="8" height="8" viewBox="0 0 8 8" aria-hidden="true"><path d="M0 5h8v2H0z" fill="#222" /></svg>
          </button>
          <button type="button" aria-label="Развернуть" className="flex h-5 w-[27px] items-center justify-center">
            <svg width="10" height="8" viewBox="0 0 10 8" aria-hidden="true"><path d="M0 0h10v8H0zM1 2v5h8V2z" fill="#222" fillRule="evenodd" /></svg>
          </button>
          <button type="button" aria-label="Закрыть" className="flex h-5 w-[45px] items-center justify-center bg-[#c75050]">
            <svg width="8" height="7" viewBox="0 0 8 7" aria-hidden="true"><path d="M.5 0l7 7M7.500 0l-7 7" stroke="#fff" strokeWidth="1.700" /></svg>
          </button>
        </div>
      </header>

      <div className="flex min-h-0 flex-1 flex-col border border-[#d0d0d0] bg-[#efefef]">
        <MenuBar />

        <Toolbar label="Проект и навигация">
          <FirstGrip />
          <Tool label="Создать" icon={<NewFile />} />
          <Tool label="Открыть" icon={<OpenFolder />} />
          <Tool label="Сохранить" icon={<Floppy />} />
          <Tool label="Сохранить как" icon={<Floppy><PenBadge /></Floppy>} />
          <Tool label="Новый макет" icon={<NewComposer />} />
          <Tool label="Управление макетами" icon={<ComposerManager />} />
          <ToolGrip />
          <Tool label="Сенсорная прокрутка" icon={<TouchHand />} pressed />
          <Tool label="Прокрутка" icon={<PanHand />} />
          <Tool label="Прокрутка к выделению" icon={<PanSelection />} />
          <Tool label="Увеличить" icon={<ZoomIn />} />
          <Tool label="Уменьшить" icon={<ZoomOut />} />
          <Tool label="Исходный размер" icon={<ZoomNative />} />
          <Tool label="Полный охват" icon={<ZoomFull />} />
          <Tool label="Увеличить до выделения" icon={<ZoomSelection />} />
          <Tool label="Увеличить до слоя" icon={<ZoomLayer />} />
          <Tool label="Предыдущий охват" icon={<ZoomHistory />} />
          <Tool label="Следующий охват" icon={<ZoomHistory next />} />
          <Tool label="Новая закладка" icon={<Book star />} />
          <Tool label="Закладки" icon={<Book />} />
          <Tool label="Обновить" icon={<Refresh />} />
          <ToolGrip />
          <Tool label="Определить объекты" icon={<Identify />} />
          <Tool label="Действие" icon={<RunAction />} />
          <Drop label="Действия" />
          <Tool label="Выделить" icon={<SelectRect />} />
          <Drop label="Способы выделения" />
          <Tool label="Выделить по выражению" icon={<SelectExpr />} />
          <Drop label="Выражения" />
          <Tool label="Снять выделение" icon={<Deselect />} />
          <Tool label="Таблица атрибутов" icon={<TableIcon />} />
          <Tool label="Калькулятор полей" icon={<Abacus />} />
          <Tool label="Статистика" icon={<Sigma />} />
          <Tool label="Измерить" icon={<Measure />} />
          <Drop label="Измерения" color="#000" />
          <Tool label="Подсказки" icon={<Tip />} />
          <button type="button" aria-label="Ещё" className="mr-1 ml-auto text-[15px] leading-5 font-bold">»</button>
          <ToolGrip />
          <Tool label="Справка" icon={<HelpBook />} />
        </Toolbar>

        <Toolbar label="Правка и подписи">
          <FirstGrip />
          <Tool label="Текущие правки" icon={<Edits />} />
          <Tool label="Режим правки" icon={<TogglePencil />} />
          <Tool label="Сохранить правки" icon={<SaveEdits />} />
          <Tool label="Добавить объект" icon={<AddPoint />} />
          <Tool label="Добавить дугу" icon={<AddCurve />} />
          <Drop label="Дуги" />
          <Tool label="Переместить объект" icon={<MovePoint />} />
          <Tool label="Редактирование узлов" icon={<NodeTool />} />
          <Tool label="Удалить" icon={<Trash />} />
          <Tool label="Вырезать" icon={<Scissors />} />
          <Tool label="Копировать" icon={<Copy />} />
          <Tool label="Вставить" icon={<Paste />} />
          <ToolGrip />
          <Tool label="Подписи" icon={<LabelPlain />} />
          <Tool label="Диаграммы" icon={<Diagram />} />
          <Tool label="Закреплённые подписи" icon={<PinActive />} />
          <Tool label="Закрепить подпись" icon={<PinGrey />} />
          <Tool label="Показать подписи" icon={<LabelEye />} />
          <Tool label="Переместить подпись" icon={<LabelMove />} />
          <Tool label="Повернуть подпись" icon={<LabelRotate />} />
          <Tool label="Изменить подпись" icon={<LabelEdit />} />
          <ToolGrip />
          <Tool label="Каталог метаданных" icon={<Csw />} />
          <ToolGrip />
          <Tool label="Консоль Python" icon={<Python />} />
          <Tool label="Центр координат" icon={<Target />} />
        </Toolbar>

        <Toolbar label="CITORUS" last>
          <FirstGrip />
          <button type="button" aria-label="CITORUS.Link" className="flex size-[34px] shrink-0 items-center justify-center border-2 border-[#e81c24]">
            <Citrus />
          </button>
        </Toolbar>

        <div className="flex min-h-0 flex-1">
          <SourceBar />

          <section className="flex w-[287px] shrink-0 flex-col">
            <DockTitle title="Панель слоёв" />
            <div role="toolbar" aria-label="Панель слоёв" className="flex h-[34px] shrink-0 items-center gap-[11px] pl-2">
              <button type="button" aria-label="Стиль"><Brush /></button>
              <button type="button" aria-label="Добавить группу"><AddGroup /></button>
              <button type="button" aria-label="Видимость"><Eye /></button>
              <button type="button" aria-label="Фильтр легенды"><Funnel /></button>
              <button type="button" aria-label="Фильтр по выражению" className="flex items-center gap-1">
                <ExprFilter />
                <Caret color="#8a8a8a" />
              </button>
              <button type="button" aria-label="Развернуть всё"><TreeArrow /></button>
              <button type="button" aria-label="Свернуть всё"><TreeArrow up /></button>
              <button type="button" aria-label="Удалить слой"><RemoveLayer /></button>
            </div>
            <div className="min-h-0 flex-1 rounded-xs border border-[#b0b0b0] bg-white" />
          </section>

          <Splitter />

          <main className="flex min-w-0 flex-1 flex-col pr-[11px] pb-[38px] pl-[11px]">
            <h2 className="mt-3 mb-[3px] text-[21px] leading-7 font-bold">Недавние проекты</h2>
            <div className="min-h-0 flex-1 rounded-xs border border-[#b0b0b0] bg-white" />
          </main>

          <Splitter wide />

          <section className="flex w-[350px] shrink-0 flex-col">
            <DockTitle title="CITORUS.Link" />
            <div className="mt-[9px] flex h-[49px] shrink-0 items-center pl-[7px]">
              <PanelButton label="Загрузить"><QArrow /></PanelButton>
              <div className="w-[14px]" />
              <PanelButton label="Выгрузить"><QArrow out /></PanelButton>
              <div className="w-[18px]" />
              <PanelButton label="Синхронизировать"><Sync /></PanelButton>
              <div className="mx-[14px] flex h-[49px] w-[50px] items-center justify-center border-2 border-[#e81c24]">
                <PanelButton label="Настройки"><Gear /></PanelButton>
              </div>
              <PanelButton label="Редактировать"><BigPencil /></PanelButton>
            </div>
            <div className="mt-[5px] mr-[15px] ml-[7px] min-h-0 flex-1 rounded-xs border border-[#b0b0b0] bg-white" />
            <div className="mr-[15px] flex h-[29px] shrink-0 items-center justify-end gap-1 text-[#0000e6]">
              <span className="font-bold">?</span>
              <a href="#help" className="underline">Help</a>
            </div>
          </section>
        </div>

        <StatusBar />
      </div>
    </div>
  );
}
